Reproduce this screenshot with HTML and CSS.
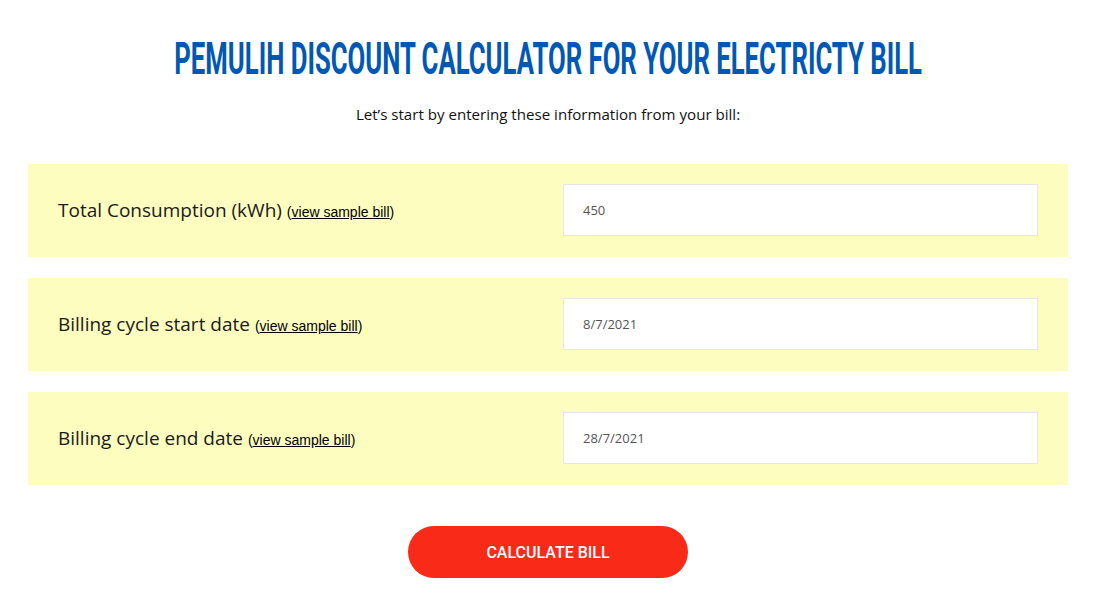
FILE: index.html
```html
<!DOCTYPE html>
<html>
<head>
<meta charset="utf-8">
<link rel="stylesheet" href="styles.css">
</head>
<body>
<main class="page">
  <h1 class="title"><span class="title-text">PEMULIH DISCOUNT CALCULATOR FOR YOUR ELECTRICTY BILL</span></h1>
  <p class="intro">Let’s start by entering these information from your bill:</p>
  <form class="form">
    <div class="row">
      <label class="label">Total Consumption (kWh) <a class="sample" href="#">(<u>view sample bill</u>)</a></label>
      <div class="field">450</div>
    </div>
    <div class="row">
      <label class="label">Billing cycle start date <a class="sample" href="#">(<u>view sample bill</u>)</a></label>
      <div class="field">8/7/2021</div>
    </div>
    <div class="row">
      <label class="label">Billing cycle end date <a class="sample" href="#">(<u>view sample bill</u>)</a></label>
      <div class="field">28/7/2021</div>
    </div>
    <div class="actions">
      <button type="button" class="btn">CALCULATE BILL</button>
    </div>
  </form>
</main>
</body>
</html>
```

FILE: styles.css
```css
html, body {
  margin: 0;
  padding: 0;
  background: #ffffff;
  overflow: hidden;
}
.page {
  padding: 0 30px 0 28px;
  font-family: "Open Sans", "DejaVu Sans", sans-serif;
}
.title {
  margin: 0;
  padding-top: 37px;
  display: flex;
  justify-content: center;
  font-family: "Roboto", sans-serif;
  font-weight: 700;
  font-size: 44px;
  line-height: 44px;
  color: #0058b5;
  white-space: nowrap;
}
.title-text {
  flex: none;
  transform: scaleX(0.584);
  transform-origin: center;
}
.intro {
  margin: 23px 0 0 0;
  text-align: center;
  font-size: 15.1px;
  line-height: 20px;
  color: #111;
}
.form {
  margin-top: 40px;
  display: flex;
  flex-direction: column;
  gap: 21px;
}
.row {
  background: #fdfdc0;
  display: flex;
  align-items: center;
  justify-content: space-between;
  padding: 20px 30px 21px 30px;
}
.label {
  font-size: 19px;
  color: #1a1a1a;
}
.sample {
  font-family: "Liberation Sans", Arial, sans-serif;
  font-size: 14px;
  color: #000;
  text-decoration: none;
}
.field {
  box-sizing: border-box;
  width: 475px;
  height: 52px;
  background: #fff;
  border: 1px solid #e6e6e6;
  padding: 0 19px;
  display: flex;
  align-items: center;
  font-size: 13px;
  color: #555;
}
.actions {
  display: flex;
  justify-content: center;
  padding-top: 20px;
}
.btn {
  width: 280px;
  height: 52px;
  border: 0;
  border-radius: 26px;
  background: #f92a17;
  color: #fff;
  font-family: "Roboto", sans-serif;
  font-weight: 500;
  font-size: 16px;
}
```
